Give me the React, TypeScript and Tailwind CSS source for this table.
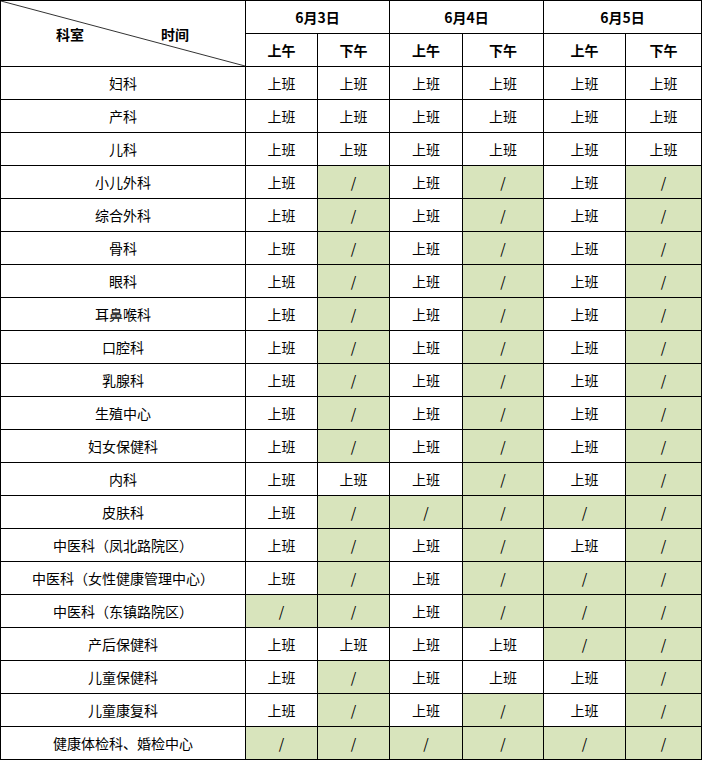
import React from "react";

const W = "上班";
const X = "/";

// [科室, 6月3日上午, 下午, 6月4日上午, 下午, 6月5日上午, 下午]
const rows: string[][] = [
  ["妇科", W, W, W, W, W, W],
  ["产科", W, W, W, W, W, W],
  ["儿科", W, W, W, W, W, W],
  ["小儿外科", W, X, W, X, W, X],
  ["综合外科", W, X, W, X, W, X],
  ["骨科", W, X, W, X, W, X],
  ["眼科", W, X, W, X, W, X],
  ["耳鼻喉科", W, X, W, X, W, X],
  ["口腔科", W, X, W, X, W, X],
  ["乳腺科", W, X, W, X, W, X],
  ["生殖中心", W, X, W, X, W, X],
  ["妇女保健科", W, X, W, X, W, X],
  ["内科", W, W, W, X, W, X],
  ["皮肤科", W, X, X, X, X, X],
  ["中医科（凤北路院区）", W, X, W, X, W, X],
  ["中医科（女性健康管理中心）", W, X, W, X, X, X],
  ["中医科（东镇路院区）", X, X, W, X, X, X],
  ["产后保健科", W, W, W, W, X, X],
  ["儿童保健科", W, X, W, W, W, X],
  ["儿童康复科", W, X, W, X, W, X],
  ["健康体检科、婚检中心", X, X, X, X, X, X],
];

const dates = ["6月3日", "6月4日", "6月5日"];

export default function App() {
  return (
    <div className="bg-white w-[704px] h-[761px] font-['Noto_Sans_CJK_SC',sans-serif] text-[14px] text-black">
      <div className="inline-grid grid-cols-[244px_71px_71px_72px_80px_81px_75px] auto-rows-[32px] gap-px p-px bg-black">
        {/* corner cell */}
        <div className="relative row-span-2 bg-white">
          <svg className="absolute inset-0" width="244" height="65" viewBox="0 0 244 65">
            <line x1="0" y1="0" x2="244" y2="65" stroke="#333" strokeWidth="1" />
          </svg>
          <span className="absolute left-[55px] top-[26px] font-bold leading-none">科室</span>
          <span className="absolute left-[160px] top-[26px] font-bold leading-none">时间</span>
        </div>
        {dates.map((d) => (
          <div key={d} className="col-span-2 bg-white flex items-center justify-center font-bold">
            {d}
          </div>
        ))}
        {dates.map((d) => (
          <React.Fragment key={d + "-half"}>
            <div className="bg-white flex items-center justify-center font-bold">上午</div>
            <div className="bg-white flex items-center justify-center font-bold">下午</div>
          </React.Fragment>
        ))}
        {rows.map((r) => (
          <React.Fragment key={r[0]}>
            <div className="bg-white flex items-center justify-center">{r[0]}</div>
            {r.slice(1).map((c, i) => (
              <div
                key={i}
                className={
                  c === X
                    ? "bg-[#d8e4bc] flex items-center justify-center"
                    : "bg-white flex items-center justify-center"
                }
              >
                {c}
              </div>
            ))}
          </React.Fragment>
        ))}
      </div>
    </div>
  );
}
